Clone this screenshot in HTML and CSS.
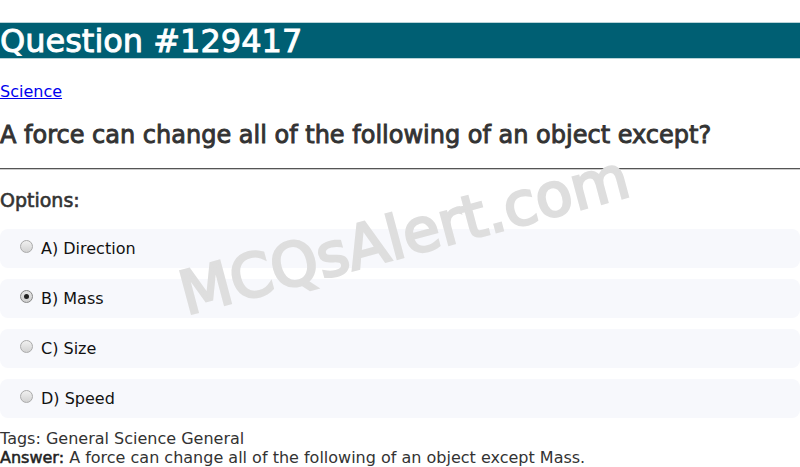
FILE: index.html
```html
<!DOCTYPE html>
<html>
<head>
<meta charset="utf-8">
<link rel="stylesheet" href="styles.css">
</head>
<body>
<div class="page">
  <h1 class="title">Question #129417</h1>
  <a class="cat" href="#">Science</a>
  <h2 class="question">A force can change all of the following of an object except?</h2>
  <hr class="rule">
  <h3 class="opts-label">Options:</h3>
  <div class="options">
    <label class="option"><span class="radio"></span>A) Direction</label>
    <label class="option"><span class="radio checked"></span>B) Mass</label>
    <label class="option"><span class="radio"></span>C) Size</label>
    <label class="option"><span class="radio"></span>D) Speed</label>
  </div>
  <div class="tags">Tags: General Science General</div>
  <div class="answer"><span class="ans-label">Answer:</span> A force can change all of the following of an object except Mass.</div>
  <div class="watermark">MCQsAlert.com</div>
</div>
</body>
</html>
```
FILE: styles.css
```css
html, body {
  margin: 0;
  padding: 0;
  background: #fff;
  font-family: "DejaVu Sans", sans-serif;
  color: #333;
}
.page {
  position: relative;
  padding-top: 22px;
  overflow: hidden;
  height: 467px;
  box-sizing: border-box;
}
.title {
  margin: 0;
  background: #005f73;
  color: #fff;
  font-size: 32px;
  font-weight: normal;
  -webkit-text-stroke: 0.9px #fff;
  line-height: 37px;
  height: 37px;
  border-top: 1px solid #b9d3d8;
  border-bottom: 1px solid #b9d3d8;
  box-sizing: border-box;
  white-space: nowrap;
}
.cat {
  display: block;
  margin-top: 23px;
  font-size: 16px;
  line-height: 20px;
  color: #0000ee;
  width: max-content;
}
.question {
  margin: 19px 0 0;
  font-size: 24px;
  font-weight: normal;
  -webkit-text-stroke: 0.9px #333;
  line-height: 28px;
  color: #333;
}
.rule {
  margin: 19px 0 0;
  border: 0;
  border-top: 1px solid #555;
  border-bottom: 1px solid #ccc;
  height: 0;
}
.opts-label {
  margin: 18px 0 0;
  font-size: 19px;
  font-weight: normal;
  -webkit-text-stroke: 0.6px #333;
  line-height: 24px;
  color: #333;
}
.options {
  margin-top: 17px;
  display: flex;
  flex-direction: column;
  gap: 11px;
}
.option {
  display: flex;
  align-items: center;
  height: 39px;
  background: #f7f8fc;
  border-radius: 8px;
  padding-left: 20px;
  font-size: 16px;
  color: #111;
}
.radio {
  width: 13px;
  height: 13px;
  border-radius: 50%;
  border: 1px solid #aaa;
  background: linear-gradient(#f0f0f0, #d2d2d2);
  margin-right: 8px;
  margin-top: -4px;
  box-sizing: border-box;
  position: relative;
  flex: none;
}
.radio.checked {
  background: linear-gradient(#e6e6e6, #cfcfcf);
  border-color: #888;
}
.radio.checked::after {
  content: "";
  position: absolute;
  left: 3px;
  top: 3px;
  width: 5px;
  height: 5px;
  border-radius: 50%;
  background: #222;
}
.tags {
  margin-top: 11px;
  font-size: 16px;
  line-height: 19px;
}
.answer {
  font-size: 16px;
  line-height: 19px;
}
.ans-label {
  color: #222;
  -webkit-text-stroke: 0.5px #222;
}
.watermark {
  position: absolute;
  left: 173px;
  top: 200px;
  font-size: 60px;
  font-weight: normal;
  color: #dedede;
  -webkit-text-stroke: 2.6px #dedede;
  transform: rotate(-15deg);
  transform-origin: center;
  white-space: nowrap;
  pointer-events: none;
}
```
